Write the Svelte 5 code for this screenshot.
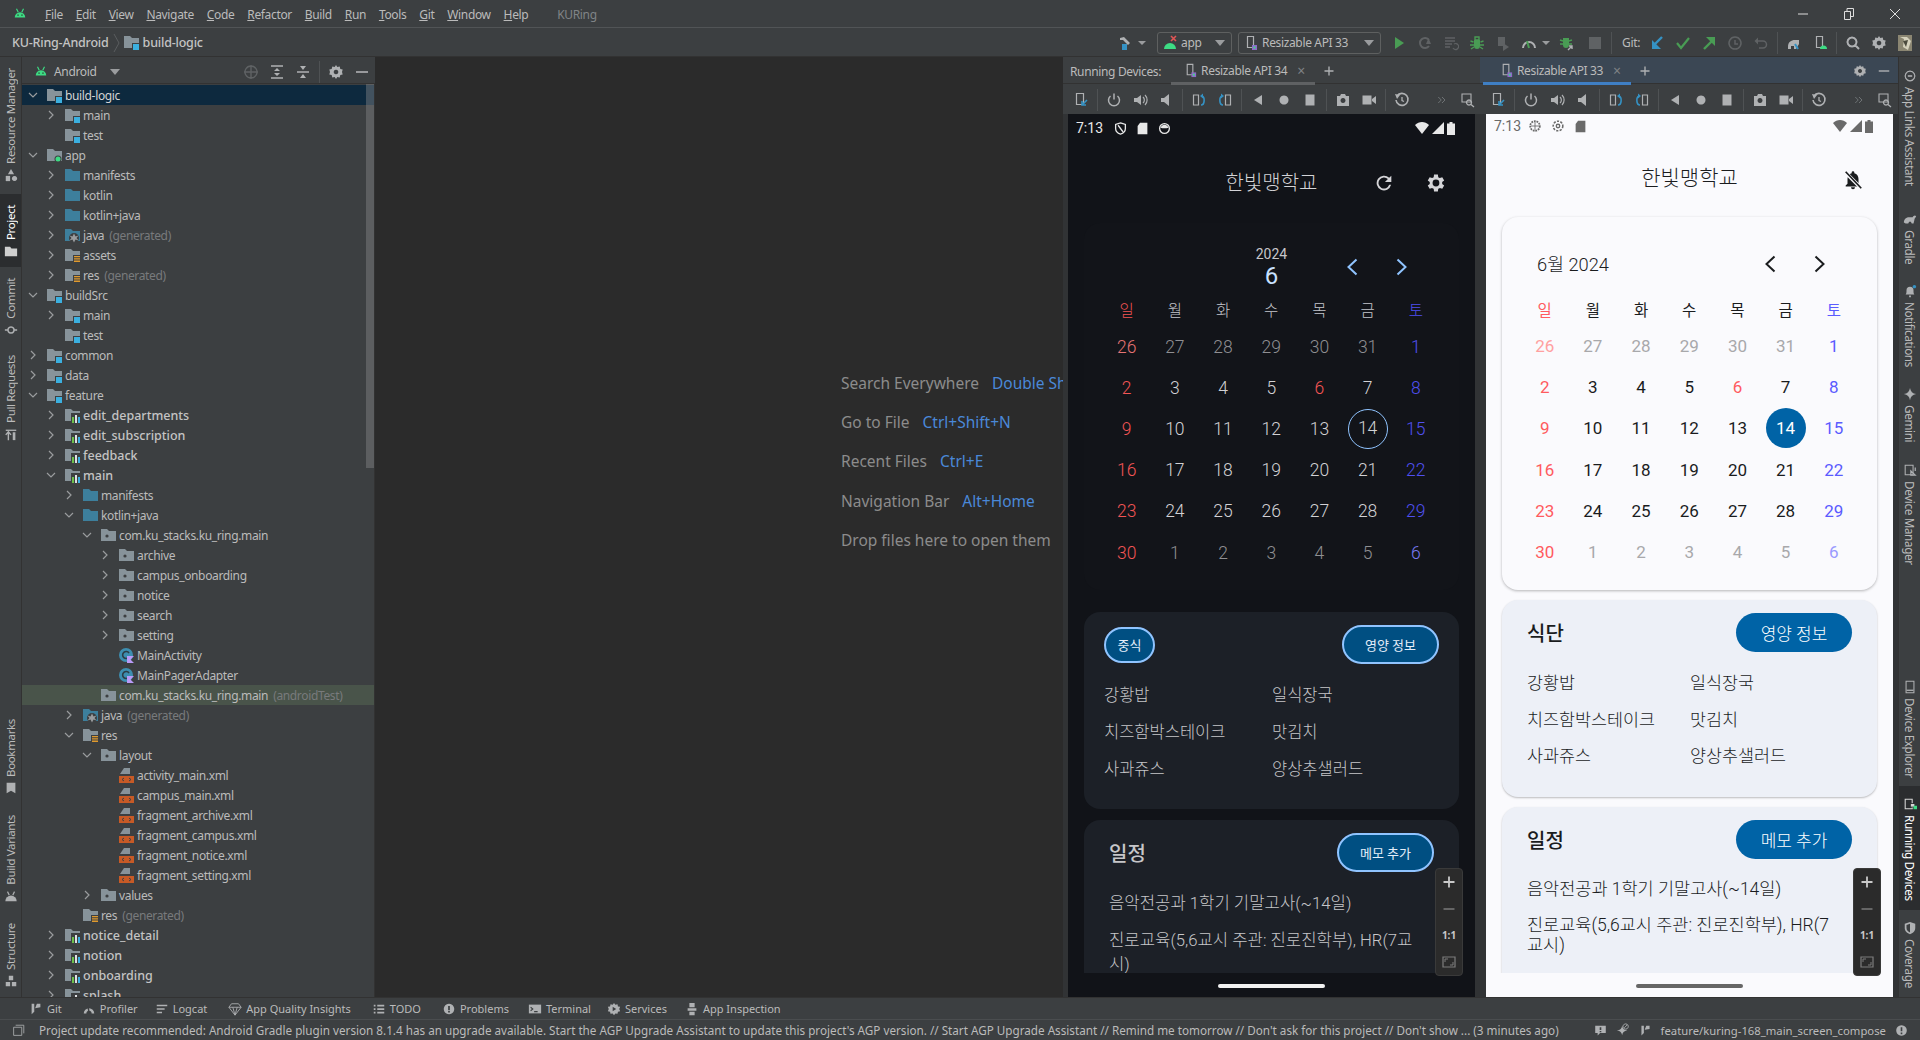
<script>
  const G = "#afb1b3";
  const D = "#5f6264";
  const icons = {
    android: [["M2 12a6 6 0 0 1 12 0z", "#3ddc84"], ["M4 2l2 4M12 2l-2 4", "#3ddc84", 1.3], ["M5 8.5h1.5v1.5H5zM9.5 8.5H11v1.5H9.5z", "#2b3a30"]],
    appx: [["M2 14a6 6 0 0 1 12 0z", "#3ddc84"], ["M9 1l5 5M14 1L9 6", "#e05555", 1.6]],
    hammer: [["M3 3l4-1 6 6-2 2-5-5H3z", G], ["M5 9h5v6H5z", "#3592c4"]],
    device: [["M4.5 1.5h6v11h-6z", G, 1.2], ["M9 10h5v5H9z", "#3c3f41"], ["M10 11h4v4h-4z", "#3ddc84"]],
    deviceP: [["M4.5 1.5h6v11h-6z", G, 1.2], ["M9 10h5v5H9z", "#8e6cc9"], ["M10.5 11.5h2v2h-2z", "#3ddc84"]],
    run: [["M4 2l9 6-9 6z", "#499c54"]],
    rerun: [["M12 5a5 5 0 1 0 0 6", D, 2], ["M9 9l2.500-6 2.500 6z", D]],
    applyc: [["M2 3h10M2 6h10M2 9h7M2 12h5", D, 1.5], ["M10 13a3 3 0 1 0 1-4", D, 1.2]],
    bug: [["M5 5h6v6a3 3 0 0 1-6 0z", "#499c54"], ["M6 2h4v3H6zM1.500 6l3 1M14.500 6l-3 1M1 10h4M15 10h-4M2 14l3-2M14 14l-3-2", "#499c54", 1.4]],
    attach: [["M3 2h7v9H3z", D], ["M8 8l6 4-6 4z", D]],
    profile: [["M2 13a6 6 0 0 1 12 0", G, 2], ["M8 13L6 6", "#499c54", 2]],
    bugarrow: [["M5 3h6v7a3 3 0 0 1-6 0z", "#499c54"], ["M2 5l3 1M14 5l-3 1M2 9h3M14 9h-3", "#499c54", 1.4], ["M10 15l4-4M11 11h3v3", G, 1.4]],
    stop: [["M2 2h12v12H2z", D]],
    down: [["M13 2L5 10", "#3592c4", 2.4], ["M3 5v9h9z", "#3592c4"]],
    check: [["M2 8l4 5 8-10", "#499c54", 2.2]],
    up: [["M3 14l8-8", "#499c54", 2.4], ["M5 2h9v9z", "#499c54"]],
    clock: [["M8 2a6 6 0 1 0 .01 0zM8 5v4h3", D, 1.5]],
    undo: [["M5 6h5a3.500 3.500 0 0 1 0 7H6", D, 1.5], ["M5 2.500v7L1.500 6z", D]],
    elephant: [["M2 12c0-5 3-7 7-7h4v4l-3 5H8v-3H5v3H2z", G], ["M9 9l3 5", "#3592c4", 2]],
    sdk: [["M4.500 1.500h6v11h-6z", G, 1.2], ["M8 14a3.500 3.500 0 0 1 7 0z", "#3ddc84"]],
    search: [["M7 2.500a4.500 4.500 0 1 0 .01 0zM10.500 10.500L14 14", G, 2]],
    gear: [["M8 1l1.300 2.100 2.400-.6.600 2.400 2.400.6L14 8l.7 2.500-2.400.6-.6 2.400-2.400-.6L8 15l-1.300-2.100-2.400.6-.6-2.400-2.400-.6L2 8l-.7-2.500 2.400-.6.600-2.400 2.400.6z", G], ["M8 5.700a2.300 2.300 0 1 0 .01 0z", "#3c3f41"]],
    minus: [["M2 7.200h12v1.600H2z", G]],
    plus: [["M8 2v12M2 8h12", G, 1.800]],
    locate: [["M8 2a6 6 0 1 0 .01 0zM8 1v14M1 8h14", D, 1.4]],
    expand: [["M2 2h12M2 14h12", G, 1.500], ["M8 4l3 3H5zM8 12l3-3H5z", G]],
    collapse: [["M2 8h12", G, 1.500], ["M8 6L5 2h6zM8 10l3 4H5z", G]],
    devarrow: [["M3.500 1.500h7v11h-7z", G, 1.200], ["M14 8l-5 5M9 9v4h4", "#3592c4", 1.600]],
    power: [["M8 1.500v6", G, 1.500], ["M4.500 4a5.500 5.500 0 1 0 7 0", G, 1.500]],
    volup: [["M2 6h3l4-3v10l-4-3H2z", G], ["M11 5a4 4 0 0 1 0 6M13 3a7 7 0 0 1 0 10", G, 1.200]],
    voldn: [["M3 6h3l5-4v12l-5-4H3z", G]],
    rotl: [["M2.500 3h5v10h-5z", G, 1.200], ["M10 13c4 0 4-8 1-9", "#3592c4", 1.600], ["M9 4l3-2.500v5z", "#3592c4"]],
    rotr: [["M8.500 3h5v10h-5z", G, 1.200], ["M6 13c-4 0-4-8-1-9", "#3592c4", 1.600], ["M7 4L4 1.500v5z", "#3592c4"]],
    back: [["M12 3v10L4 8z", G]],
    home: [["M8 3.500a4.500 4.500 0 1 0 .01 0z", G]],
    square: [["M3.500 2.500h9v11h-9z", G]],
    camera: [["M2 4h3l1-2h4l1 2h3v10H2z", G], ["M8 6a2.500 2.500 0 1 0 .01 0z", "#3c3f41"]],
    video: [["M1.500 3.500h9v9h-9zM11 7l4-3v8l-4-3z", G]],
    history: [["M3 4a6 6 0 1 1-1 4", G, 1.600], ["M1 2l5 1-3 4z", G], ["M8 5v3.500l2 1", G, 1.300]],
    more: [["M3 4l4 4-4 4M8 4l4 4-4 4", "#7a7d7f", 1.100]],
    viewm: [["M2 2h9v8H2z", G, 1.100], ["M9 8a2.500 2.500 0 1 0 .01 0zM11 12.500l3 2.500", G, 1.300]],
    resman: [["M8 1l3.500 6h-7z", G], ["M2 9h5v6H2z", G], ["M12 9a3 3 0 1 0 .01 0z", G]],
    folder: [["M1 3h6l1.500 2H15v9H1z", "#cfcfcf"]],
    commit: [["M8 4.500a3.500 3.500 0 1 0 .01 0zM1 8h3.500M11.500 8H15", G, 1.800]],
    pull: [["M2 3h12v1.500H2z", G], ["M5 15V6M2 9l3-3.500L8 9", G, 1.600], ["M10 6h3v9h-3z", G]],
    bookmark: [["M3 2h10v12l-5-3-5 3z", G]],
    buildv: [["M1.500 14a6.500 6.500 0 0 1 13 0z", G], ["M4 3l2 4M12 3l-2 4", G, 1.300]],
    structure: [["M5.500 2h5v5h-5zM2 9h5v5H2zM9 9h5v5H9z", G]],
    applinks: [["M8 2.500a5.500 5.500 0 1 0 .01 0z", G, 1.300], ["M5.500 8h5", G, 1.800]],
    gradle: [["M1 12c0-4 3-6 6-6h4c1-2 3-3 4-1-1 2-2 2-2 4l-1 4h-2l-1-2H7l-1 2H3z", G]],
    bell: [["M3 12c1-1 1-3 1-5a4 4 0 0 1 8 0c0 2 0 4 1 5zM7 13h2v2H7z", G], ["M13 1a2 2 0 1 0 .01 0z", "#3592c4"]],
    gemini: [["M8 1c.6 4 3 6.400 7 7-4 .6-6.400 3-7 7-.6-4-3-6.400-7-7 4-.6 6.400-3 7-7z", G]],
    devmgr: [["M2.500 2.500h9v11h-9z", G, 1.200], ["M9 9l5 5H9zM14 5v4", G, 1.400]],
    devexp: [["M3.500 1.500h9v13h-9z", G, 1.200], ["M4 11h8v1.500H4z", G]],
    rundev: [["M2.500 2.500h8v11h-8z", "#d8d8d8", 1.200], ["M8 7h7v5H8z", "#2f3133"], ["M9 8h4v3H9z", "#d8d8d8"], ["M12 10h4v4h-4z", "#3ddc84"]],
    coverage: [["M8 1l6 2v5c0 4-3 6-6 7-3-1-6-3-6-7V3z", G], ["M8 3v10c-2-1-4-2-4-5V4.500z", "#3c3f41"]],
    gitb: [["M3 2v12l3-3V2zM7 7l6-1V2H9z", G]],
    prof: [["M2 13a6 6 0 0 1 12 0h-3a3 3 0 0 0-6 0z", G], ["M8 13L7 5", "#3c3f41", 1.600]],
    logcat: [["M2 4h12M2 8h9M2 12h6", G, 1.700]],
    gem: [["M4 2h8l3 4-7 9-7-9zM1 6h14M5.500 6L8 15l2.500-9", G, 1]],
    todo: [["M2 3h2v2H2zM6 3h8v2H6zM2 7h2v2H2zM6 7h8v2H6zM2 11h2v2H2zM6 11h8v2H6z", G]],
    problem: [["M8 2a6 6 0 1 0 .01 0z", G], ["M7 4.500h2v4.500H7zM7 10h2v2H7z", "#3c3f41"]],
    terminal: [["M1 3h14v10H1z", G], ["M3 6l2.500 2L3 10M7 11h4", "#3c3f41", 1.200]],
    services: [["M8 1l1.500 2 2.500-.5.500 2.500 2.500.5L14 8l1 2.500-2.500.5-.5 2.500-2.500-.5L8 15l-1.500-2-2.500.5-.5-2.500-2.500-.5L2 8 1 5.500l2.500-.5L4 2.500l2.500.5z", G], ["M6.500 5.500l4 2.500-4 2.500z", "#3c3f41"]],
    inspect: [["M5 1h6v5H5zM3 7h10v3H3zM5 11h6v4H5z", G]],
    box: [["M2 4h10v10H2z", G, 1], ["M4.500 1.500h10v10", G, 1]],
    note: [["M1.500 2h13v9h-7l-3 3v-3h-3z", G], ["M7 4h2v3.500H7zM7 8.500h2v1.500H7z", "#3c3f41"]],
    gemsm: [["M7 3c.4 3 2 5 6 5.500-4 .5-5.600 2.500-6 5.500-.4-3-2-5-6-5.500 4-.5 5.600-2.500 6-5.500z", G], ["M11 1a3 3 0 1 0 .01 0zM9.500 5.500l3.500-3.500", G, 1]],
    warn: [["M8 1.500a6.500 6.500 0 1 0 .01 0z", G], ["M7 4h2v5H7zM7 10.500h2v2H7z", "#3c3f41"]],
    avatar: [["M1 0h14v16H1z", "#8b8672"], ["M3 2l4 2-1 8 5 3 3-9-4-4z", "#d6d2bd"], ["M6 6l3 6 2-7z", "#4b4a3d"]],
    fit: [["M2 3h12v10H2z", "#7d7d7d", 1.200], ["M4 8V5h3M12 8v3H9", "#7d7d7d", 1]],
    zplus: [["M8 2.500v11M2.500 8h11", "#c9c9c9", 1.800]],
    zminus: [["M2.500 8h11", "#6d6d6d", 1.800]]
  };

  const menus = ["File", "Edit", "View", "Navigate", "Code", "Refactor", "Build", "Run", "Tools", "Git", "Window", "Help"];
  const leftTop = [["Resource Manager", "resman"], ["Project", "folder", true], ["Commit", "commit"], ["Pull Requests", "pull"]];
  const leftBottom = [["Bookmarks", "bookmark"], ["Build Variants", "buildv"], ["Structure", "structure"]];
  const rightTop = [["App Links Assistant", "applinks"], ["Gradle", "gradle"], ["Notifications", "bell"], ["Gemini", "gemini"], ["Device Manager", "devmgr"]];
  const rightBottom = [["Device Explorer", "devexp"], ["Running Devices", "rundev", true], ["Coverage", "coverage"]];

  // depth, arrow (0 none, 1 closed, 2 open), icon kind, name, suffix, class
  const tree = [
    [0, 2, "mod", "build-logic", "", "sel"],
    [1, 1, "mod", "main"],
    [1, 0, "mod", "test"],
    [0, 2, "app", "app"],
    [1, 1, "src", "manifests"],
    [1, 1, "src", "kotlin"],
    [1, 1, "src", "kotlin+java"],
    [1, 1, "gen", "java", "(generated)"],
    [1, 1, "res", "assets"],
    [1, 1, "res", "res", "(generated)"],
    [0, 2, "mod", "buildSrc"],
    [1, 1, "mod", "main"],
    [1, 0, "mod", "test"],
    [0, 1, "mod", "common"],
    [0, 1, "mod", "data"],
    [0, 2, "mod", "feature"],
    [1, 1, "lib", "edit_departments", "", "bold"],
    [1, 1, "lib", "edit_subscription", "", "bold"],
    [1, 1, "lib", "feedback", "", "bold"],
    [1, 2, "lib", "main", "", "bold"],
    [2, 1, "src", "manifests"],
    [2, 2, "src", "kotlin+java"],
    [3, 2, "pkg", "com.ku_stacks.ku_ring.main"],
    [4, 1, "pkg", "archive"],
    [4, 1, "pkg", "campus_onboarding"],
    [4, 1, "pkg", "notice"],
    [4, 1, "pkg", "search"],
    [4, 1, "pkg", "setting"],
    [4, 0, "kt", "MainActivity"],
    [4, 0, "kt", "MainPagerAdapter"],
    [3, 0, "pkg", "com.ku_stacks.ku_ring.main", "(androidTest)", "test"],
    [2, 1, "gen", "java", "(generated)"],
    [2, 2, "res", "res"],
    [3, 2, "pkg", "layout"],
    [4, 0, "xml", "activity_main.xml"],
    [4, 0, "xml", "campus_main.xml"],
    [4, 0, "xml", "fragment_archive.xml"],
    [4, 0, "xml", "fragment_campus.xml"],
    [4, 0, "xml", "fragment_notice.xml"],
    [4, 0, "xml", "fragment_setting.xml"],
    [3, 1, "pkg", "values"],
    [2, 0, "res", "res", "(generated)"],
    [1, 1, "lib", "notice_detail", "", "bold"],
    [1, 1, "lib", "notion", "", "bold"],
    [1, 1, "lib", "onboarding", "", "bold"],
    [1, 1, "lib", "splash", "", "bold"]
  ];

  const folderPath = "M0 1h6l2 2h7v10H0z";

  const hints = [
    ["Search Everywhere", "Double Shift"],
    ["Go to File", "Ctrl+Shift+N"],
    ["Recent Files", "Ctrl+E"],
    ["Navigation Bar", "Alt+Home"],
    ["Drop files here to open them", ""]
  ];

  const devTools = ["devarrow", "|", "power", "volup", "voldn", "|", "rotl", "rotr", "|", "back", "home", "square", "|", "camera", "video", "|", "history"];
  const bottomTools = [["Git", "gitb", 0], ["Profiler", "prof", 20], ["Logcat", "logcat", 17], ["App Quality Insights", "gem", 21], ["TODO", "todo", 21], ["Problems", "problem", 21], ["Terminal", "terminal", 19], ["Services", "services", 16], ["App Inspection", "inspect", 18]];

  const weekdays = ["일", "월", "화", "수", "목", "금", "토"];
  const days = [];
  for (let d = 26; d <= 31; d++) days.push({ n: d, out: true });
  for (let d = 1; d <= 30; d++) days.push({ n: d, out: false });
  for (let d = 1; d <= 6; d++) days.push({ n: d, out: true });

  const meals = ["강황밥", "일식장국", "치즈함박스테이크", "맛김치", "사과쥬스", "양상추샐러드"];

  function dayClass(day, i) {
    let c = "day";
    if (i % 7 === 0 || (day.n === 6 && !day.out)) c += " sun";
    if (i % 7 === 6 && !(day.n === 6 && !day.out)) c += " sat";
    if (day.out) c += " out";
    if (day.n === 14) c += " today";
    return c;
  }
</script>

{#snippet icon(name, size = 16)}
  <svg class="ic" width={size} height={size} viewBox="0 0 16 16">
    {#each icons[name] as [d, color, sw]}
      {#if sw}
        <path {d} fill="none" stroke={color} stroke-width={sw} />
      {:else}
        <path {d} fill={color} />
      {/if}
    {/each}
  </svg>
{/snippet}

{#snippet treeIcon(kind)}
  <svg class="tic" width="15" height="15" viewBox="0 0 15 15">
    {#if kind === "kt"}
      <circle cx="7" cy="7" r="7" fill="#3d8eb0" />
      <path d="M10 5a3.500 3.500 0 1 0 0 4" fill="none" stroke="#2c3e46" stroke-width="1.600" />
      <path d="M8 8h7l-3.500 3.500L15 15H8z" fill="#b99bf8" />
    {:else if kind === "xml"}
      <path d="M5 0h6v6H1z" fill="#87939a" />
      <path d="M0 8h15v7H0z" fill="#c75a26" />
      <path d="M5 10l-2 1.500L5 13M10 10l2 1.500L10 13" fill="none" stroke="#3c3f41" stroke-width="1" />
    {:else if kind === "src"}
      <path d={folderPath} fill="#3d7f9c" />
    {:else if kind === "gen"}
      <path d={folderPath} fill="#3d7f9c" />
      <circle cx="9" cy="10" r="5" fill="#3c3f41" />
      <path d="M9 5.500l1.500 3 3-1-2 2.500 2 2.500-3-1-1.500 3-1.500-3-3 1 2-2.500-2-2.500 3 1z" fill="#9a9c9e" />
    {:else}
      <path d={folderPath} fill="#87939a" />
      {#if kind === "mod"}
        <path d="M8 8h7v7H8z" fill="#3c3f41" /><path d="M9 9h6v6H9z" fill="#3bb0e0" />
      {:else if kind === "app"}
        <circle cx="11" cy="11" r="3.500" fill="#3c3f41" /><circle cx="11" cy="11" r="2.500" fill="#3ddc84" />
      {:else if kind === "res"}
        <path d="M8 7h7v8H8z" fill="#3c3f41" /><path d="M9 8h6v1.300H9zM9 10.300h6v1.300H9zM9 12.600h6v1.300H9z" fill="#e09a2e" />
      {:else if kind === "lib"}
        <path d="M6 5h9v10H6z" fill="#3c3f41" /><path d="M7 9h2v6H7z" fill="#6cc04a" /><path d="M10 7h2v8h-2z" fill="#dfe1e3" /><path d="M13 9h2v6h-2z" fill="#3bb0e0" />
      {:else if kind === "pkg"}
        <circle cx="6" cy="8" r="1.600" fill="#3c3f41" />
      {/if}
    {/if}
  </svg>
{/snippet}

{#snippet deviceToolbar()}
  <div class="devbar">
    {#each devTools as t}
      {#if t === "|"}
        <i class="sep"></i>
      {:else}
        <span class="slot">{@render icon(t)}</span>
      {/if}
    {/each}
    <span class="slot push">{@render icon("more", 12)}</span>
    <span class="slot">{@render icon("viewm")}</span>
  </div>
{/snippet}

{#snippet zoomControls()}
  <div class="zoomctl">
    <span>{@render icon("zplus")}</span>
    <span>{@render icon("zminus")}</span>
    <span class="one">1:1</span>
    <span>{@render icon("fit")}</span>
  </div>
{/snippet}

{#snippet chevrons()}
  <svg width="24" height="24" viewBox="0 0 24 24"><path d="M15.500 4.500L7.500 12l8 7.500" /></svg>
  <svg width="24" height="24" viewBox="0 0 24 24"><path d="M8.500 4.500l8 7.500-8 7.500" /></svg>
{/snippet}

{#snippet grid()}
  <div class="grid">
    {#each weekdays as w, i}
      <div class="wd" class:sun={i === 0} class:sat={i === 6}>{w}</div>
    {/each}
    {#each days as day, i}
      <div class={dayClass(day, i)}><span>{day.n}</span></div>
    {/each}
  </div>
{/snippet}

{#snippet mealList()}
  <div class="meals">
    {#each meals as m}
      <div>{m}</div>
    {/each}
  </div>
{/snippet}

<div class="ide">
  <header class="menubar">
    <span class="logo">{@render icon("android", 14)}</span>
    {#each menus as m}
      <span class="menu"><u>{m[0]}</u>{m.slice(1)}</span>
    {/each}
    <span class="project-title">KURing</span>
    <span class="winctl">
      <svg width="12" height="12" viewBox="0 0 12 12"><path d="M1 6h10" stroke="#ddd" /></svg>
      <svg width="12" height="12" viewBox="0 0 12 12"><path d="M1.500 3.500h6v8h-6zM4 3.500v-3h6.500v8h-3" fill="none" stroke="#ddd" /></svg>
      <svg width="12" height="12" viewBox="0 0 12 12"><path d="M1 1l10 10M11 1L1 11" stroke="#ddd" /></svg>
    </span>
  </header>

  <div class="navbar">
    <b class="crumb">KU-Ring-Android</b>
    <svg class="crumbsep" width="7" height="20" viewBox="0 0 7 20"><path d="M1 1l5 9-5 9" fill="none" stroke="#5a5d5f" /></svg>
    {@render treeIcon("mod")}
    <b class="crumb">build-logic</b>

    <div class="actions">
      <span class="slot">{@render icon("hammer")}</span>
      <span class="caret small"></span>
      <span class="combo app">{@render icon("appx")}<span>app</span><span class="caret"></span></span>
      <span class="combo dev">{@render icon("deviceP")}<span>Resizable API 33</span><span class="caret"></span></span>
      <span class="slot first">{@render icon("run")}</span>
      <span class="slot">{@render icon("rerun")}</span>
      <span class="slot">{@render icon("applyc")}</span>
      <span class="slot">{@render icon("bug")}</span>
      <span class="slot">{@render icon("attach")}</span>
      <span class="slot">{@render icon("profile")}</span>
      <span class="caret small"></span>
      <span class="slot wide">{@render icon("bugarrow")}</span>
      <span class="slot">{@render icon("stop")}</span>
      <i class="sep"></i>
      <span class="gitlabel">Git:</span>
      <span class="slot">{@render icon("down")}</span>
      <span class="slot">{@render icon("check")}</span>
      <span class="slot">{@render icon("up")}</span>
      <span class="slot">{@render icon("clock")}</span>
      <span class="slot">{@render icon("undo")}</span>
      <i class="sep"></i>
      <span class="slot">{@render icon("elephant")}</span>
      <span class="slot">{@render icon("sdk")}</span>
      <i class="sep"></i>
      <span class="slot">{@render icon("search")}</span>
      <span class="slot">{@render icon("gear")}</span>
      <span class="slot">{@render icon("avatar")}</span>
    </div>
  </div>

  <div class="middle">
    <aside class="strip left">
      {#each leftTop as [label, ic, active]}
        <div class="vtab" class:active><span class="vtext">{label}</span>{@render icon(ic, 14)}</div>
      {/each}
      <div class="grow"></div>
      {#each leftBottom as [label, ic]}
        <div class="vtab"><span class="vtext">{label}</span>{@render icon(ic, 14)}</div>
      {/each}
    </aside>

    <section class="project">
      <div class="panelhead">
        <span class="andr">{@render icon("android", 14)}</span>
        <span class="viewname">Android</span>
        <span class="caret"></span>
        <div class="headicons">
          <span class="slot">{@render icon("locate")}</span>
          <span class="slot">{@render icon("expand")}</span>
          <span class="slot">{@render icon("collapse")}</span>
          <i class="sep"></i>
          <span class="slot">{@render icon("gear")}</span>
          <span class="slot">{@render icon("minus")}</span>
        </div>
      </div>
      <div class="tree">
        {#each tree as [depth, arrow, kind, name, suffix, cls]}
          <div class="row {cls || ''}" style="padding-left: {4 + depth * 18}px">
            <span class="arrow">
              {#if arrow}
                <svg width="10" height="10" viewBox="0 0 10 10">
                  <path d={arrow === 1 ? "M3 1l4 4-4 4" : "M1 3l4 4 4-4"} fill="none" stroke="#9a9c9e" stroke-width="1.200" />
                </svg>
              {/if}
            </span>
            {@render treeIcon(kind)}
            <span class="name">{name}</span>
            {#if suffix}<span class="suffix">{suffix}</span>{/if}
          </div>
        {/each}
        <div class="scrollthumb"></div>
      </div>
    </section>

    <main class="editor">
      {#each hints as [label, key]}
        <div class="hint">{label}{#if key}<span class="key">{key}</span>{/if}</div>
      {/each}
    </main>

    <section class="devpanel first-panel">
      <div class="tabs">
        <span class="tabtitle">Running Devices:</span>
        <span class="tab current">{@render icon("deviceP", 15)}<span>Resizable API 34</span><em>×</em></span>
        <span class="addtab">{@render icon("plus", 12)}</span>
      </div>
      {@render deviceToolbar()}
      <div class="phone dark">
        <div class="statusrow">
          <span class="clock">7:13</span>
          <svg class="st" width="13" height="13" viewBox="0 0 16 16"><path d="M8 1l6 2v5c0 4-3 6-6 7-3-1-6-3-6-7V3zM5 4l6 8" fill="none" stroke="currentColor" stroke-width="1.600" /></svg>
          <svg class="st" width="13" height="13" viewBox="0 0 16 16"><path d="M5 1h9v14H2V5z" fill="currentColor" /></svg>
          <svg class="st" width="13" height="13" viewBox="0 0 16 16"><circle cx="8" cy="8" r="6" fill="none" stroke="currentColor" stroke-width="1.600" /><path d="M3 7c2-5 8-5 10 0-3 1-7 1-10 0z" fill="currentColor" /></svg>
          <span class="sysright">
            <svg width="14" height="12" viewBox="0 0 14 12"><path d="M0 3c4-4 10-4 14 0L7 12z" fill="currentColor" /></svg>
            <svg width="12" height="12" viewBox="0 0 12 12"><path d="M12 0v12H0z" fill="currentColor" /></svg>
            <svg width="8" height="13" viewBox="0 0 8 13"><path d="M2.500 0h3v1.500H8V13H0V1.500h2.500z" fill="currentColor" /></svg>
          </span>
        </div>
        <div class="scroll">
          <div class="apptop">
            <h1>한빛맹학교</h1>
            <span class="topicons">
              <svg width="22" height="22" viewBox="0 0 24 24"><path d="M17.650 6.350A8 8 0 1 0 19.750 14h-2.080a6 6 0 1 1-1.430-6.240L13 11h7V4z" fill="#d5d5d8" /></svg>
              <svg width="24" height="24" viewBox="0 0 24 24"><path d="M19.140 12.940a7 7 0 0 0 0-1.880l2.030-1.580-1.920-3.320-2.390.96a7 7 0 0 0-1.620-.94L14.880 3.600h-3.840l-.36 2.580c-.59.24-1.130.56-1.620.94l-2.390-.96-1.920 3.320 2.030 1.580a7 7 0 0 0 0 1.880l-2.030 1.580 1.920 3.320 2.390-.96c.49.38 1.030.7 1.620.94l.36 2.580h3.840l.36-2.580c.59-.24 1.130-.56 1.620-.94l2.390.96 1.920-3.320zM12.960 15.400a3.400 3.400 0 1 1 0-6.800 3.400 3.400 0 0 1 0 6.800z" fill="#d5d5d8" /></svg>
            </span>
          </div>
          <div class="card calendar">
            <div class="calhead">
              <div></div>
              <div class="monthstack"><div class="yr">2024</div><div class="mo">6</div></div>
              <div class="chev">{@render chevrons()}</div>
            </div>
            {@render grid()}
          </div>
          <div class="card meal">
            <div class="cardhead">
              <span class="chip">중식</span>
              <span class="btn">영양 정보</span>
            </div>
            {@render mealList()}
          </div>
          <div class="card sched">
            <div class="cardhead">
              <span class="cardtitle">일정</span>
              <span class="btn">메모 추가</span>
            </div>
            <p>음악전공과 1학기 기말고사(~14일)</p>
            <p>진로교육(5,6교시 주관: 진로진학부), HR(7교시)</p>
          </div>
        </div>
        <div class="gesture"><i></i></div>
        {@render zoomControls()}
      </div>
    </section>

    <section class="devpanel second-panel">
      <div class="tabs active">
        <span class="tab current blue">{@render icon("deviceP", 15)}<span>Resizable API 33</span><em>×</em></span>
        <span class="addtab">{@render icon("plus", 12)}</span>
        <span class="tabright">{@render icon("gear", 14)}{@render icon("minus", 14)}</span>
      </div>
      {@render deviceToolbar()}
      <div class="phone light">
        <div class="statusrow">
          <span class="clock">7:13</span>
          <svg class="st" width="14" height="14" viewBox="0 0 16 16"><circle cx="8" cy="8" r="5.500" fill="none" stroke="currentColor" stroke-width="2" stroke-dasharray="2 1" /><path d="M3 8h10M8 3v10" stroke="currentColor" /></svg>
          <svg class="st" width="14" height="14" viewBox="0 0 16 16"><circle cx="8" cy="8" r="5.500" fill="none" stroke="currentColor" stroke-width="1.800" stroke-dasharray="2.500 1.500" /><circle cx="8" cy="8" r="2" fill="none" stroke="currentColor" stroke-width="1.500" /></svg>
          <svg class="st" width="13" height="13" viewBox="0 0 16 16"><path d="M5 1h9v14H2V5z" fill="currentColor" /></svg>
          <span class="sysright">
            <svg width="14" height="12" viewBox="0 0 14 12"><path d="M0 3c4-4 10-4 14 0L7 12z" fill="currentColor" /></svg>
            <svg width="12" height="12" viewBox="0 0 12 12"><path d="M12 0v12H0z" fill="currentColor" /></svg>
            <svg width="8" height="13" viewBox="0 0 8 13"><path d="M2.500 0h3v1.500H8V13H0V1.500h2.500z" fill="currentColor" /></svg>
          </span>
        </div>
        <div class="scroll">
          <div class="apptop">
            <h1>한빛맹학교</h1>
            <span class="topicons">
              <svg width="22" height="22" viewBox="0 0 24 24"><path d="M12 22a2.200 2.200 0 0 0 2.200-2.200H9.800A2.200 2.200 0 0 0 12 22zM18 16v-5c0-3-1.600-5.600-4.500-6.300V4a1.500 1.500 0 0 0-3 0v.7C7.600 5.400 6 8 6 11v5l-2 2v1h16v-1z" fill="#1a1c1e" /><path d="M3 3l18 18" stroke="#fafafd" stroke-width="4" /><path d="M4 3l17 18" stroke="#1a1c1e" stroke-width="1.800" /></svg>
            </span>
          </div>
          <div class="card calendar">
            <div class="calhead">
              <div class="monthline">6월 2024</div>
              <div class="chev">{@render chevrons()}</div>
            </div>
            {@render grid()}
          </div>
          <div class="card meal">
            <div class="cardhead">
              <span class="cardtitle">식단</span>
              <span class="btn">영양 정보</span>
            </div>
            {@render mealList()}
          </div>
          <div class="card sched">
            <div class="cardhead">
              <span class="cardtitle">일정</span>
              <span class="btn">메모 추가</span>
            </div>
            <p>음악전공과 1학기 기말고사(~14일)</p>
            <p>진로교육(5,6교시 주관: 진로진학부), HR(7교시)</p>
          </div>
        </div>
        <div class="gesture"><i></i></div>
        {@render zoomControls()}
      </div>
    </section>

    <aside class="strip right">
      {#each rightTop as [label, ic]}
        <div class="vtab">{@render icon(ic, 14)}<span class="vtext">{label}</span></div>
      {/each}
      <div class="grow"></div>
      {#each rightBottom as [label, ic, active]}
        <div class="vtab" class:active>{@render icon(ic, 14)}<span class="vtext">{label}</span></div>
      {/each}
    </aside>
  </div>

  <div class="toolwindows">
    {#each bottomTools as [label, ic, gap]}
      <span class="tw" style="margin-left: {gap}px">{@render icon(ic, 14)}{label}</span>
    {/each}
  </div>

  <footer class="statusbar">
    <span class="sb-box">{@render icon("box", 13)}</span>
    <span class="sb-msg">Project update recommended: Android Gradle plugin version 8.1.4 has an upgrade available. Start the AGP Upgrade Assistant to update this project's AGP version. // Start AGP Upgrade Assistant // Remind me tomorrow // Don't ask for this project // Don't show ... (3 minutes ago)</span>
    <span class="sb-right">
      {@render icon("note", 13)}
      {@render icon("gemsm", 14)}
      {@render icon("gitb", 13)}
      <span>feature/kuring-168_main_screen_compose</span>
      {@render icon("warn", 13)}
    </span>
  </footer>
</div>

<style>
  :global(body) {
    margin: 0;
    background: #3c3f41;
  }
  .ide {
    width: 1920px;
    height: 1040px;
    display: flex;
    flex-direction: column;
    overflow: hidden;
    background: #3c3f41;
    color: #bbbbbb;
    font: 12px "Noto Sans", sans-serif;
    letter-spacing: -0.35px;
  }
  .ic, .tic { flex: none; display: block; }
  .slot {
    width: 26px;
    height: 20px;
    display: flex;
    align-items: center;
    justify-content: center;
    flex: none;
  }
  .sep {
    width: 1px;
    height: 22px;
    margin: 0 2px;
    background: #4f5254;
    flex: none;
  }
  .caret {
    width: 0;
    height: 0;
    border-left: 5px solid transparent;
    border-right: 5px solid transparent;
    border-top: 6px solid #9a9c9e;
    flex: none;
  }
  .caret.small { border-width: 4px 4px 0; }

  .menubar {
    height: 28px;
    box-sizing: border-box;
    flex: none;
    display: flex;
    align-items: center;
    border-bottom: 1px solid #515456;
    padding: 1px 0 0 13px;
  }
  .logo { width: 32px; }
  .menu { margin-right: 12.900px; }
  .project-title { margin-left: 16px; color: #808487; }
  .winctl {
    margin-left: auto;
    display: flex;
    gap: 34px;
    padding-right: 19px;
  }

  .navbar {
    height: 29px;
    box-sizing: border-box;
    flex: none;
    display: flex;
    align-items: center;
    padding: 1px 0 0 12px;
    border-bottom: 1px solid #323232;
  }
  .crumb { font-weight: 500; color: #c4c4c4; font-size: 12.500px; letter-spacing: -0.2px; }
  .crumbsep { margin: 0 4px 0 4px; }
  .navbar .tic { margin-right: 4px; }
  .actions {
    margin-left: auto;
    display: flex;
    align-items: center;
    padding-right: 2px;
  }
  .actions .sep { margin: 0 3px; }
  .combo {
    height: 22px;
    box-sizing: border-box;
    border: 1px solid #5e6060;
    border-radius: 3px;
    display: flex;
    align-items: center;
    gap: 3px;
    margin-left: 11px;
    padding: 0 6px 0 4px;
    white-space: nowrap;
  }
  .combo .caret { margin-left: auto; }
  .combo.app { width: 75px; }
  .combo.dev { width: 143px; margin-left: 6px; }
  .first { margin-left: 5px; }
  .wide { width: 32px; }
  .gitlabel { margin: 0 4px 0 7px; }

  .middle {
    flex: none;
    height: 940px;
    display: flex;
  }

  .strip {
    width: 22px;
    flex: none;
    display: flex;
    flex-direction: column;
    font-size: 11.500px;
  }
  .strip.left { border-right: 1px solid #323232; width: 21px; }
  .strip.right { border-left: 1px solid #323232; width: 21px; font-size: 11.700px; }
  .grow { flex: 1; }
  .vtab {
    display: flex;
    flex-direction: column;
    align-items: center;
    gap: 4px;
    padding: 11px 0 9px;
  }
  .left .vtab:first-child { padding-bottom: 12px; }
  .left .vtab:nth-child(3) { padding-bottom: 7px; }
  .right .vtab:first-child { padding: 12px 0 15px; }
  .vtab.active { background: #2b2d2f; color: #fff; }
  .vtext { writing-mode: vertical-rl; white-space: nowrap; }
  .left .vtext { transform: rotate(180deg); }

  .project {
    width: 353px;
    flex: none;
    display: flex;
    flex-direction: column;
    min-height: 0;
  }
  .panelhead {
    height: 27px;
    flex: none;
    box-sizing: border-box;
    border-bottom: 1px solid #323232;
    display: flex;
    align-items: center;
    padding: 3px 0 0 12px;
  }
  .andr { margin-right: 6px; }
  .viewname { width: 56px; }
  .headicons { margin-left: auto; display: flex; align-items: center; }
  .headicons .sep { margin: 0 3px; }
  .tree {
    position: relative;
    flex: 1;
    min-height: 0;
    overflow: hidden;
    border-right: 1px solid #323232;
    padding-top: 1px;
  }
  .row {
    height: 20px;
    display: flex;
    align-items: center;
    white-space: nowrap;
    font-size: 12px;
    box-sizing: border-box;
  }
  .row.sel { background: #0d293e; color: #d4d4d4; }
  .row.test { background: #49544a; }
  .row.bold .name { font-weight: 500; color: #c4c4c4; font-size: 12.500px; letter-spacing: 0; }
  .arrow {
    width: 21px;
    flex: none;
    display: flex;
    align-items: center;
    padding-left: 2px;
    box-sizing: border-box;
  }
  .name { margin-left: 3px; }
  .suffix { margin-left: 5px; color: #787a7c; }
  .scrollthumb {
    position: absolute;
    top: 0;
    right: 0;
    width: 8px;
    height: 384px;
    background: rgba(130, 133, 135, 0.45);
  }

  .editor {
    flex: none;
    width: 688px;
    box-sizing: border-box;
    background: #2b2b2b;
    padding: 307px 0 0 466px;
    overflow: hidden;
    white-space: nowrap;
    font-size: 15.500px;
    letter-spacing: 0;
    color: #8c8c8c;
  }
  .hint { height: 39.200px; line-height: 39.200px; }
  .key { margin-left: 13px; color: #4a88d8; }

  .devpanel {
    flex: none;
    display: flex;
    flex-direction: column;
    background: #313335;
    box-sizing: border-box;
    min-height: 0;
  }
  .first-panel { width: 417px; }
  .second-panel { width: 418px; }
  .tabs {
    height: 27px;
    flex: none;
    display: flex;
    align-items: center;
    position: relative;
    background: #3c3f41;
    box-sizing: border-box;
    border-bottom: 1px solid #323232;
    padding: 2px 0 0 7px;
  }
  .tabs.active { background: #3b4754; }
  .tabtitle { margin-right: 22px; }
  .tab {
    height: 27px;
    display: flex;
    align-items: center;
    gap: 3px;
    position: relative;
    top: -1px;
  }
  .tab em { font-style: normal; margin-left: 7px; color: #7f8285; font-size: 14px; }
  .tab.current::after {
    content: "";
    position: absolute;
    left: -12px;
    right: -10px;
    bottom: -1px;
    height: 3px;
    background: #5f6163;
  }
  .tab.blue { margin-left: 12px; }
  .tab.blue::after { background: #3f7fc4; left: -16px; right: -10px; }
  .addtab { margin-left: 18px; }
  .tabright { margin-left: auto; display: flex; gap: 10px; padding-right: 7px; }

  .devbar {
    height: 30px;
    flex: none;
    box-sizing: border-box;
    display: flex;
    align-items: center;
    background: #3c3f41;
    padding: 1px 0 0 5px;
  }
  .devbar .sep { margin: 0 3px; }
  .push { margin-left: 14px; }

  .phone {
    position: relative;
    flex: 1;
    min-height: 0;
    width: 407px;
    margin-left: 5px;
    display: flex;
    flex-direction: column;
    font-family: Roboto, "Noto Sans CJK KR", sans-serif;
    letter-spacing: 0;
  }
  .second-panel .phone { margin-left: 6px; }
  .phone.dark {
    background: #111318;
    color: #c6c6c9;
    --day: #d2d2d5;
    --out: #8f8f92;
    --sun: #f25555;
    --sun-out: #e57373;
    --sat: #5050f0;
    --sat-out: #7878f0;
    --wd: #c4c6cc;
    --card: #1c2027;
  }
  .phone.light {
    background: #fafafd;
    color: #1a1c1e;
    --day: #1a1c1e;
    --out: #a8a8ab;
    --sun: #ff5b5f;
    --sun-out: #ffa0a0;
    --sat: #5b5bff;
    --sat-out: #9999ff;
    --wd: #1a1c1e;
    --card: #edf0f7;
  }
  .statusrow {
    height: 28px;
    flex: none;
    display: flex;
    align-items: center;
    box-sizing: border-box;
    padding: 0 20px 0 8px;
    gap: 9px;
    font-size: 14px;
  }
  .dark .statusrow { color: #e8e8e8; }
  .light .statusrow { color: #6a6a6a; padding-bottom: 4px; }
  .clock { margin-right: 2px; }
  .light .clock { margin-right: -2px; }
  .sysright { margin-left: auto; display: flex; align-items: center; gap: 3px; }
  .scroll {
    height: 831px;
    overflow: hidden;
    flex: none;
  }
  .apptop {
    display: flex;
    align-items: center;
    justify-content: center;
    position: relative;
  }
  .apptop h1 { margin: 0; font-weight: 300; }
  .dark .apptop { height: 81px; padding-bottom: 2px; box-sizing: border-box; }
  .dark .apptop h1 { font-size: 20px; color: #d4d4d7; }
  .light .apptop { height: 75px; padding-bottom: 7px; box-sizing: border-box; }
  .light .apptop h1 { font-size: 21px; }
  .topicons {
    position: absolute;
    right: 28px;
    top: 50%;
    transform: translateY(-50%);
    display: flex;
    gap: 28px;
    align-items: center;
  }
  .light .topicons { right: 29px; }

  .card {
    margin: 0 16px;
    border-radius: 16px;
  }
  .calendar { box-sizing: border-box; }
  .dark .calendar { height: 367px; background: #121419; padding-top: 1px; }
  .light .calendar {
    height: 373px;
    background: #fafafd;
    padding-top: 1.500px;
    box-shadow: 0 1px 3px rgba(0, 0, 0, 0.28);
  }
  .calhead { display: grid; }
  .dark .calhead {
    grid-template-columns: 1fr 40px 1fr;
    padding: 21px 19px 7px;
    height: 72px;
    box-sizing: border-box;
  }
  .light .calhead {
    grid-template-columns: 1fr auto;
    align-items: center;
    height: 77px;
    padding: 28px 46px 14px 35px;
    box-sizing: border-box;
  }
  .monthstack { text-align: center; }
  .yr { font-size: 14px; line-height: 18px; color: #c6c6c9; }
  .mo { font-size: 24px; line-height: 26px; color: #c9e1ff; }
  .monthline { font-size: 18.300px; font-weight: 300; margin-top: -3px; }
  .chev { display: flex; gap: 24px; align-items: center; }
  .dark .chev { padding: 10px 0 0 49px; align-items: flex-start; }
  .chev svg { flex: none; }
  .chev path { fill: none; stroke-width: 2; }
  .dark .chev path { stroke: #90c4ff; }
  .light .chev path { stroke: #1a1c1e; }
  .grid {
    display: grid;
    grid-template-columns: repeat(7, 48.200px);
    grid-template-rows: 30px;
    grid-auto-rows: 41.200px;
    margin-left: 18.600px;
    font-size: 17px;
    text-align: center;
  }
  .dark .grid { font-weight: 300; font-size: 17.500px; }
  .wd {
    font-size: 15.500px;
    line-height: 30px;
    color: var(--wd);
  }
  .wd.sun { color: var(--sun); }
  .wd.sat { color: var(--sat); }
  .day {
    color: var(--day);
    display: flex;
    align-items: center;
    justify-content: center;
  }
  .day span {
    width: 40px;
    height: 40px;
    line-height: 40px;
    border-radius: 50%;
    box-sizing: border-box;
  }
  .day.out { color: var(--out); }
  .day.sun { color: var(--sun); }
  .day.sat { color: var(--sat); }
  .day.sun.out { color: var(--sun-out); }
  .day.sat.out { color: var(--sat-out); }
  .dark .day.today span { border: 1.500px solid #90c4ff; line-height: 37px; }
  .light .day.today span { background: #0063a6; color: #fff; }

  .meal, .sched {
    background: var(--card);
    box-sizing: border-box;
  }
  .sched { height: 300px; }
  .dark .meal { margin-top: 22px; height: 197px; padding: 13px 20px 0; }
  .dark .sched { margin-top: 11px; padding: 13px 25px 0 25px; }
  .light .meal {
    margin-top: 10px;
    height: 197px;
    padding: 13px 25px 0;
    box-shadow: 0 1px 2px rgba(0, 0, 0, 0.25);
  }
  .light .sched {
    margin-top: 10px;
    padding: 13px 25px 0;
    box-shadow: 0 1px 2px rgba(0, 0, 0, 0.25);
  }
  .cardhead {
    display: flex;
    align-items: center;
    justify-content: space-between;
    height: 39px;
  }
  .cardtitle { font-size: 20px; font-weight: 500; }
  .chip, .btn {
    display: flex;
    align-items: center;
    justify-content: center;
    box-sizing: border-box;
    border-radius: 20px;
    color: #e4eefa;
  }
  .dark .chip, .dark .btn {
    background: #004f82;
    border: 2px solid #90c4ff;
    font-size: 13px;
  }
  .chip { width: 51px; height: 36px; }
  .btn { width: 97px; height: 39px; }
  .light .btn { width: 116px; background: #0063a6; color: #fff; font-size: 17px; font-weight: 300; }
  .meals {
    display: grid;
    grid-template-columns: 168px auto;
    grid-auto-rows: 37px;
    align-items: center;
    margin-top: 11px;
    font-weight: 300;
  }
  .dark .meals { font-size: 16.500px; }
  .light .meals { font-size: 17.400px; margin-top: 11px; grid-auto-rows: 36.700px; grid-template-columns: 163px auto; }
  .sched p { margin: 0; font-weight: 300; }
  .dark .sched p { font-size: 16.700px; line-height: 24px; margin-top: 13px; padding-right: 10px; }
  .dark .sched .cardhead + p { margin-top: 20px; }
  .light .sched p { font-size: 17.500px; line-height: 20px; margin-top: 16px; padding-right: 8px; }
  .light .sched .cardhead + p { margin-top: 20px; }

  .gesture {
    flex: 1;
    display: flex;
    align-items: center;
    justify-content: center;
  }
  .gesture i {
    width: 107px;
    height: 4px;
    border-radius: 2px;
    margin-top: 1px;
  }
  .dark .gesture i { background: #f2f2f2; }
  .light .gesture i { background: #666; }

  .zoomctl {
    position: absolute;
    right: 12px;
    top: 754px;
    width: 28px;
    height: 108px;
    box-sizing: border-box;
    border-radius: 4px;
    background: #2b2b2b;
    border: 1px solid #3a3a3a;
    display: grid;
    grid-template-rows: repeat(4, 1fr);
    justify-items: center;
    align-items: center;
    color: #c9c9c9;
    font: 700 10px "Noto Sans", sans-serif;
  }

  .toolwindows {
    height: 23px;
    flex: none;
    box-sizing: border-box;
    display: flex;
    align-items: center;
    border-top: 1px solid #323232;
    border-bottom: 1px solid #4a4d4f;
    padding-left: 29px;
    font-size: 11px;
    letter-spacing: 0;
    white-space: nowrap;
  }
  .tw { display: flex; align-items: center; gap: 4px; }

  .statusbar {
    flex: 1;
    display: flex;
    align-items: center;
    white-space: nowrap;
    font-size: 11.700px;
    letter-spacing: 0;
    padding-left: 12px;
  }
  .sb-box { width: 27px; }
  .sb-right {
    margin-left: auto;
    display: flex;
    align-items: center;
    gap: 9px;
    padding-right: 12px;
    font-size: 11.300px;
  }
</style>
